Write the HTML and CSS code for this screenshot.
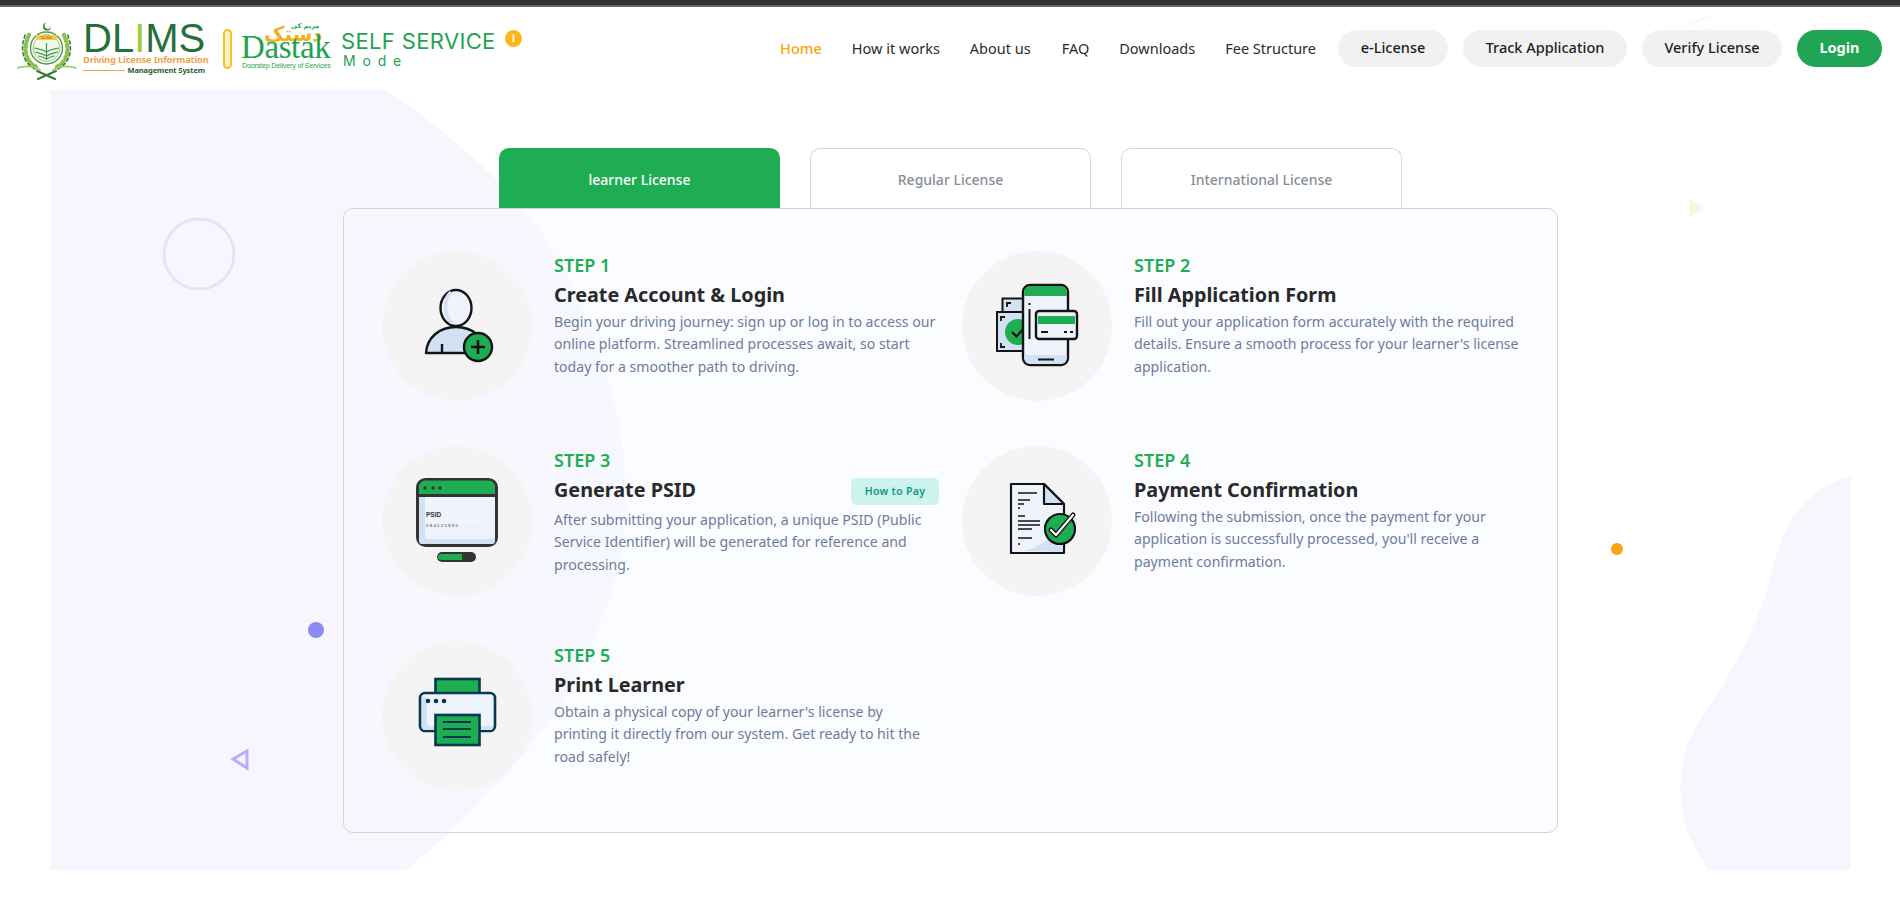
FILE: index.html
```html
<!DOCTYPE html>
<html lang="en">
<head>
<meta charset="utf-8">
<title>DLIMS Self Service</title>
<link rel="stylesheet" href="styles.css">
</head>
<body>
<div class="topbar"></div>
<header class="header">
  <div class="brand">
    <svg class="emblem" viewBox="0 0 60 60" aria-hidden="true">
      <g fill="none" stroke-linecap="round">
        <path d="M19 45C9 40 5 27 12 13" stroke="#8cc152" stroke-width="4.500" stroke-dasharray="2.500 3.500"/>
        <path d="M40 45C50 40 54 27 47 13" stroke="#8cc152" stroke-width="4.500" stroke-dasharray="2.500 3.500"/>
        <path d="M18 47C6 41 2 27 9 11" stroke="#2e7d32" stroke-width="1.500" stroke-dasharray="3 3"/>
        <path d="M41 47C53 41 57 27 50 11" stroke="#2e7d32" stroke-width="1.500" stroke-dasharray="3 3"/>
      </g>
      <path d="M29.500 0.500a4 4 0 1 0 4.500 4.500 3.400 3.400 0 1 1-4.500-4.500z" fill="#2e7d32"/>
      <circle cx="29.500" cy="26" r="16" fill="#fff" stroke="#4c9a4f" stroke-width="1.400"/>
      <circle cx="29.500" cy="26" r="13.500" fill="#f1f8e9" stroke="#a5c27c" stroke-width="1"/>
      <path d="M19 15.500h21" stroke="#f7c948" stroke-width="5"/>
      <text class="emblem-text" x="29.500" y="17" text-anchor="middle">DLIMS</text>
      <path d="M29.500 21v17M17 26c4 1 8 1 12.500 4 4.500-3 8.500-3 12.500-4M18 30c4 1 7 1 11.500 4 4.500-3 7.500-3 11.500-4M21 34c3 0 5 1 8.500 3 3.500-2 5.500-3 8.500-3" fill="none" stroke="#3f9a52" stroke-width="1.200"/>
      <path d="M0 46c8-2.500 16-2 23 2M59 46c-8-2.500-16-2-23 2" fill="none" stroke="#9ccc65" stroke-width="1.800" stroke-linecap="round"/>
      <path d="M20 49l18 8M39 49l-18 8" stroke="#2e7d32" stroke-width="2" stroke-linecap="round"/>
    </svg>
    <div class="dlims">
      <div class="dlims-name">DL<span class="dlims-i">I</span>MS</div>
      <div class="dlims-sub">Driving License Information</div>
      <div class="dlims-foot"><span class="dlims-rule"></span><span>Management System</span></div>
    </div>
    <span class="pill"></span>
    <div class="dastak">
      <span class="dastak-top">مریم کی</span>
      <span class="dastak-urdu">دستک</span>
      <span class="dastak-name">Dastak</span>
      <span class="dastak-sub">Doorstep Delivery of Services</span>
    </div>
    <div class="service">
      <div class="service-title">SELF SERVICE</div>
      <div class="service-mode">Mode</div>
    </div>
    <span class="info">i</span>
  </div>
  <nav class="nav">
    <a class="nav-link active">Home</a>
    <a class="nav-link">How it works</a>
    <a class="nav-link">About us</a>
    <a class="nav-link">FAQ</a>
    <a class="nav-link">Downloads</a>
    <a class="nav-link">Fee Structure</a>
    <div class="nav-buttons">
      <a class="btn btn-e">e-License</a>
      <a class="btn btn-t">Track Application</a>
      <a class="btn btn-v">Verify License</a>
      <a class="btn btn-login">Login</a>
    </div>
  </nav>
</header>
<main class="main">
  <svg class="backdrop" viewBox="0 0 1900 807" aria-hidden="true">
    <path class="blob" d="M51 0H385C440 35 490 80 521 116C570 175 612 270 624 370C630 430 620 480 606 516C590 565 570 610 537 647C500 695 450 745 406 780H51Z"/>
    <path class="blob" d="M1851 386C1810 398 1785 425 1772 480C1760 535 1730 585 1700 630C1675 670 1670 725 1708 780H1851Z"/>
    <circle class="ring" cx="199" cy="164" r="35"/>
    <circle class="dot-purple" cx="316" cy="540" r="8"/>
    <path class="tri-purple" d="M247 661L233 669L247 678Z"/>
    <path class="tri-peach" d="M1690 109L1704 118L1690 127Z"/>
    <circle class="dot-orange" cx="1617" cy="459" r="6"/>
    <path class="tri-faint" d="M1710 -75L1692 -66L1710 -58Z"/>
  </svg>
  <div class="tabs">
    <a class="tab tab-active">learner License</a>
    <a class="tab">Regular License</a>
    <a class="tab">International License</a>
  </div>
  <section class="card">
    <article class="step">
      <div class="disc">
        <svg viewBox="0 0 150 150" aria-hidden="true">
          <path d="M44 102C45 86 58 76 74 76S103 86 104 102Z" fill="#d2e1f3" stroke="#141414" stroke-width="2.400" stroke-linejoin="round"/>
          <path d="M60 102v-9" stroke="#141414" stroke-width="2.400"/>
          <ellipse cx="74" cy="57" rx="15.500" ry="18" fill="#eff3fb" stroke="#141414" stroke-width="2.400"/>
          <path d="M69 41C62 47 61 63 70 72" fill="none" stroke="#d2e1f3" stroke-width="3.500"/>
          <circle cx="96" cy="96" r="14" fill="#1fad53" stroke="#141414" stroke-width="2.400"/>
          <path d="M96 89v14M89 96h14" stroke="#141414" stroke-width="2.600"/>
        </svg>
      </div>
      <div class="step-body">
        <div class="step-no">STEP 1</div>
        <h2 class="step-title">Create Account &amp; Login</h2>
        <p class="step-text">Begin your driving journey: sign up or log in to access our online platform. Streamlined processes await, so start today for a smoother path to driving.</p>
      </div>
    </article>
    <article class="step">
      <div class="disc">
        <svg viewBox="-1 0 150 150" aria-hidden="true">
          <rect x="39.500" y="47.500" width="24" height="40" fill="#d2e1f3" stroke="#141414" stroke-width="2"/>
          <rect x="34" y="61" width="28" height="39" fill="#d2e1f3" stroke="#141414" stroke-width="2"/>
          <circle cx="55" cy="81" r="13" fill="#1fad53"/>
          <path d="M49 81l4.500 4.500 7-8" fill="none" stroke="#141414" stroke-width="2.200"/>
          <path d="M38 70v-4h4M38 92v4h4M44 56v-4h4" fill="none" stroke="#141414" stroke-width="1.800"/>
          <rect x="60" y="34" width="45" height="80" rx="7" fill="#eff3fb" stroke="#141414" stroke-width="2.400"/>
          <path d="M61.200 45V41a6 6 0 0 1 6-6H97.800a6 6 0 0 1 6 6V45Z" fill="#1fad53"/>
          <path d="M61.200 104V107a6 6 0 0 0 6 6H97.800a6 6 0 0 0 6-6V104Z" fill="#d2e1f3"/>
          <path d="M75 108.500h16M66.500 58v30M66.500 52v2" stroke="#141414" stroke-width="2"/>
          <rect x="73" y="60" width="41" height="28" rx="3" fill="#eff3fb" stroke="#141414" stroke-width="2.400"/>
          <rect x="75" y="65" width="37" height="8" fill="#1fad53"/>
          <path d="M78 81h7M101 81h3M107 81h3" stroke="#141414" stroke-width="2"/>
        </svg>
      </div>
      <div class="step-body">
        <div class="step-no">STEP 2</div>
        <h2 class="step-title">Fill Application Form</h2>
        <p class="step-text">Fill out your application form accurately with the required details. Ensure a smooth process for your learner's license application.</p>
      </div>
    </article>
    <article class="step">
      <div class="disc">
        <svg viewBox="0 0 150 150" aria-hidden="true">
          <rect x="35.500" y="33.500" width="79" height="66" rx="8" fill="#eff3fb" stroke="#333" stroke-width="3"/>
          <path d="M37 48V41a6.500 6.500 0 0 1 6.500-6.500H106.500a6.500 6.500 0 0 1 6.500 6.500V48Z" fill="#1fad53"/>
          <path d="M36 49.500h78" stroke="#333" stroke-width="3"/>
          <path d="M37 51h6v39a3 3 0 0 0 3 3h67v2a3 3 0 0 1-3 3H40a3 3 0 0 1-3-3Z" fill="#d2e1f3"/>
          <circle cx="43" cy="42" r="1.700" fill="#333"/>
          <circle cx="51" cy="42" r="1.700" fill="#333"/>
          <circle cx="58" cy="42" r="1.700" fill="#333"/>
          <text class="psid" x="44" y="71">PSID</text>
          <text class="psid-no" x="44" y="81">084525895........</text>
          <rect x="55" y="106" width="39" height="10" rx="5" fill="#333"/>
          <path d="M59 108h21v6H59a3 3 0 0 1 0-6Z" fill="#1fad53"/>
        </svg>
      </div>
      <div class="step-body">
        <div class="step-no">STEP 3</div>
        <div class="title-row">
          <h2 class="step-title">Generate PSID</h2>
          <a class="how-pay">How to Pay</a>
        </div>
        <p class="step-text">After submitting your application, a unique PSID (Public Service Identifier) will be generated for reference and processing.</p>
      </div>
    </article>
    <article class="step">
      <div class="disc">
        <svg viewBox="0 0 150 150" aria-hidden="true">
          <path d="M49 38H82L102 58V107H49Z" fill="#eff3fb" stroke="#141414" stroke-width="2.200" stroke-linejoin="round"/>
          <path d="M63 105C80 100 92 90 101 75V106Z" fill="#d2e1f3"/>
          <path d="M82 38V58H102Z" fill="#d2e1f3" stroke="#141414" stroke-width="2.200" stroke-linejoin="round"/>
          <path d="M56 47h19M56 54h12M56 58h6M56 62h2M56 70h7M56 75h22M56 79h22M56 83h14M56 92h14M56 98h2" stroke="#141414" stroke-width="1.600"/>
          <circle cx="98" cy="83" r="15" fill="#1fad53" stroke="#141414" stroke-width="2.200"/>
          <path d="M89 84l5 5 17-20" fill="none" stroke="#141414" stroke-width="5" stroke-linecap="round" stroke-linejoin="round"/>
          <path d="M89 84l5 5 17-20" fill="none" stroke="#fff" stroke-width="2.200" stroke-linecap="round" stroke-linejoin="round"/>
        </svg>
      </div>
      <div class="step-body">
        <div class="step-no">STEP 4</div>
        <h2 class="step-title">Payment Confirmation</h2>
        <p class="step-text">Following the submission, once the payment for your application is successfully processed, you'll receive a payment confirmation.</p>
      </div>
    </article>
    <article class="step">
      <div class="disc">
        <svg viewBox="0 0 150 150" aria-hidden="true">
          <rect x="53.500" y="38" width="44" height="15" fill="#1fad53" stroke="#063a4f" stroke-width="2.600"/>
          <rect x="38" y="52" width="75" height="38" rx="5" fill="#eff3fb" stroke="#063a4f" stroke-width="2.600"/>
          <path d="M40 56h5v26a3 3 0 0 0 3 3h63v1a3 3 0 0 1-3 3H43a3 3 0 0 1-3-3Z" fill="#d2e1f3"/>
          <circle cx="46" cy="60" r="2.300" fill="#063a4f"/>
          <circle cx="54" cy="60" r="2.300" fill="#063a4f"/>
          <circle cx="62" cy="60" r="2.300" fill="#063a4f"/>
          <rect x="53.500" y="74" width="44" height="30" fill="#1fad53" stroke="#063a4f" stroke-width="2.600"/>
          <path d="M61 81h28M61 88h28M61 96h28" stroke="#063a4f" stroke-width="2"/>
        </svg>
      </div>
      <div class="step-body">
        <div class="step-no">STEP 5</div>
        <h2 class="step-title">Print Learner</h2>
        <p class="step-text">Obtain a physical copy of your learner's license by printing it directly from our system. Get ready to hit the road safely!</p>
      </div>
    </article>
  </section>
</main>
</body>
</html>
```

FILE: styles.css
```css
* { box-sizing: border-box; }
html, body { margin: 0; padding: 0; height: 100%; overflow: hidden; }
body { background: #fff; font-family: "Noto Sans", "Open Sans", sans-serif; color: #252525; }

.topbar { height: 7px; background: #333; border-bottom: 2px solid #666; }

.header { position: relative; z-index: 1; height: 83px; display: flex; align-items: center; justify-content: space-between; padding: 0 18px 0 17px; }

.brand { display: flex; align-items: center; height: 60px; }
.emblem { width: 60px; height: 60px; margin-top: 6px; flex: none; }
.emblem-text { font: 700 3.500px "Liberation Sans", sans-serif; fill: #c97a10; }

.dlims { margin-left: 6px; width: 122px; padding-top: 1px; }
.dlims-name { font: 400 40px/31px "Liberation Sans", sans-serif; color: #256f3a; white-space: nowrap; }
.dlims-i { color: #9ccc3c; }
.dlims-sub { font: 700 9.300px/10px "Noto Sans", sans-serif; color: #f0a24a; white-space: nowrap; margin-top: 1px; letter-spacing: -.15px; }
.dlims-foot { display: flex; align-items: center; justify-content: space-between; font: 700 7.500px/10px "Noto Sans", sans-serif; color: #2c5a33; white-space: nowrap; letter-spacing: -.1px; }
.dlims-rule { width: 42px; height: 1px; background: #f0a24a; }

.pill { width: 9px; height: 40px; margin-left: 18px; border: 2px solid #fbbf24; border-radius: 5px; background: #fff3c4; flex: none; }

.dastak { position: relative; width: 90px; height: 42px; margin-left: 9px; flex: none; }
.dastak-name { position: absolute; left: 0; top: 6px; font: 400 33px/27px "Liberation Serif", serif; color: #1fa34f; letter-spacing: -.4px; }
.dastak-urdu { position: absolute; left: 23px; top: -4px; font: 700 20px/20px "DejaVu Sans", sans-serif; color: #f3b11b; }
.dastak-top { position: absolute; left: 50px; top: -6px; font: 700 6.500px/8px "DejaVu Sans", sans-serif; color: #1fa34f; }
.dastak-sub { position: absolute; left: 1px; top: 33px; font: 400 7px/9px "Liberation Sans", sans-serif; color: #1fa34f; white-space: nowrap; letter-spacing: -.12px; }

.service { margin-left: 10px; width: 154px; flex: none; }
.service-title { font: 400 22px/25px "Inter", sans-serif; color: #1fa34f; white-space: nowrap; letter-spacing: .35px; }
.service-mode { font: 400 14px/14px "Inter", sans-serif; color: #1fa34f; letter-spacing: 6.800px; margin-left: 2px; }

.info { width: 17px; height: 17px; margin: 0 0 20px 10px; border-radius: 50%; background: #f9b91a; color: #fff; font: 700 10px/17px "Noto Sans", sans-serif; text-align: center; flex: none; }

.nav { display: flex; align-items: center; font-size: 14.500px; color: #2b2b2b; }
.nav-link { margin-right: 30px; margin-bottom: 2px; white-space: nowrap; }
.nav-link:nth-child(3) { margin-right: 31px; }
.nav-link:nth-child(6) { margin-right: 22px; }
.nav-link.active { color: #fca311; font-weight: 500; }
.nav-buttons { display: flex; gap: 15px; }
.btn { height: 37px; border-radius: 19px; background: #f1f1f1; color: #1d1d1d; font-weight: 500; font-size: 14.500px; line-height: 35px; text-align: center; white-space: nowrap; }
.btn-e { width: 110px; }
.btn-t { width: 164px; }
.btn-v { width: 140px; }
.btn-login { width: 85px; background: #1fa553; color: #fff; font-weight: 700; }

.main { position: relative; height: 807px; padding-top: 58px; }
.backdrop { position: absolute; left: 0; top: 0; width: 1900px; height: 807px; overflow: visible; }
.blob { fill: #f7f6fe; }
.ring { fill: none; stroke: #e5e4f4; stroke-width: 3; }
.dot-purple { fill: #8c8cf0; }
.dot-orange { fill: #fca311; }
.tri-purple { fill: none; stroke: #b3aefc; stroke-width: 3; }
.tri-peach { fill: #fdf3dc; }
.tri-faint { fill: none; stroke: #f9f9f9; stroke-width: 2; }

.tabs { position: relative; display: flex; gap: 30px; width: 1215px; height: 60px; margin: 0 auto; padding-left: 156.500px; }
.tab { width: 281px; height: 60px; border: 1px solid #d6d6d6; border-bottom: 0; border-radius: 10px 10px 0 0; background: #fff; color: #868e99; font-size: 14px; font-weight: 500; line-height: 61px; text-align: center; }
.tab-active { background: #1fad53; border-color: #1fad53; color: #fff; }

.card { position: relative; display: grid; grid-template-columns: 580px 580px; grid-auto-rows: 150px; row-gap: 45px; width: 1215px; height: 625px; margin: 0 auto; padding: 42px 0 0 38.500px; background: rgba(247, 249, 255, .5); border: 1px solid #d4d4d4; border-radius: 10px; }

.step { display: flex; gap: 22px; }
.disc { width: 150px; height: 150px; border-radius: 50%; background: #f4f4f4; flex: none; }
.disc svg { display: block; width: 150px; height: 150px; }
.psid { font: 700 6.500px "Liberation Sans", sans-serif; fill: #333; }
.psid-no { font: 400 4.300px "Liberation Sans", sans-serif; fill: #333; letter-spacing: 1.300px; }

.step-body { width: 385px; padding-top: 2px; }
.step-no { font-size: 18px; font-weight: 600; line-height: 24px; color: #1fad53; margin-bottom: 6px; }
.step-title { margin: 0; font-size: 19.800px; font-weight: 700; line-height: 24px; color: #292929; }
.title-row { display: flex; align-items: flex-start; justify-content: space-between; height: 27px; }
.how-pay { width: 88px; height: 27px; border-radius: 5px; background: #cdf3ec; color: #0b9b82; font-size: 10.500px; font-weight: 600; line-height: 27px; text-align: center; letter-spacing: .3px; }
.step-text { margin: 4px 0 0; font-size: 14.100px; line-height: 22.400px; color: #6e7c99; }
```
